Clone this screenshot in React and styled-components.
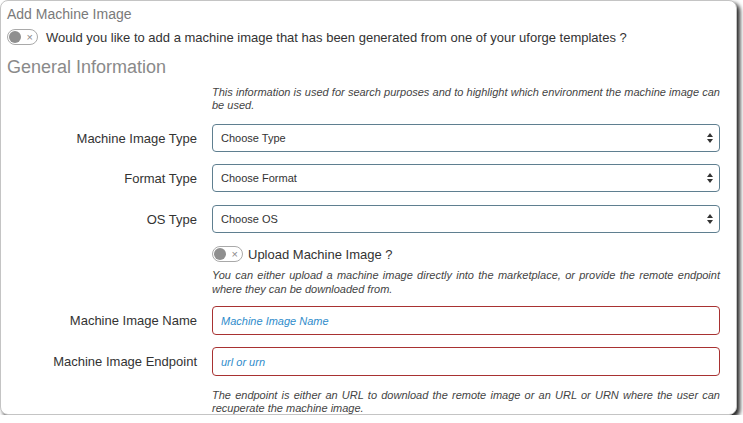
import React from "react";
import styled, { createGlobalStyle } from "styled-components";

const GlobalStyle = createGlobalStyle`
  html, body {
    margin: 0;
    padding: 0;
    background: #ffffff;
  }
  body {
    font-family: "Liberation Sans", Arial, sans-serif;
  }
`;

const Window = styled.div`
  box-sizing: border-box;
  width: 737px;
  height: 415px;
  border: 1px solid #c4c4c4;
  border-radius: 8px;
  box-shadow: 3px 3px 4px rgba(0, 0, 0, 0.85);
  background: #ffffff;
  overflow: hidden;
  padding: 3px 17px 0 6px;
`;

const Title = styled.div`
  font-size: 14px;
  line-height: 20px;
  color: #7a7a7a;
`;

const ToggleRow = styled.div`
  grid-column: ${(p) => p.$col || "auto"};
  display: flex;
  align-items: center;
  gap: ${(p) => p.$gap || 8}px;
  margin-top: ${(p) => p.$top || 0}px;
  font-size: 13px;
  color: #333;
  height: 16px;
`;

const Toggle = styled.span`
  box-sizing: border-box;
  width: 31px;
  height: 16px;
  border: 1px solid #a9a9a9;
  border-radius: 8px;
  display: flex;
  align-items: center;
  justify-content: space-between;
  padding: 0 4px 0 1px;
  flex-shrink: 0;
`;

const Knob = styled.span`
  width: 12px;
  height: 12px;
  border-radius: 50%;
  background: #8f8f8f;
`;

const Cross = styled.span`
  font-size: 11px;
  line-height: 10px;
  color: #8a8a8a;
`;

const Heading = styled.div`
  margin-top: 10px;
  font-size: 18px;
  line-height: 24px;
  color: #8a8a8a;
`;

const Row = styled.div`
  display: grid;
  grid-template-columns: 190px 508px;
  column-gap: 15px;
  align-items: center;
  margin-top: ${(p) => p.$top || 0}px;
`;

const Label = styled.label`
  text-align: right;
  font-size: 13px;
  color: #333;
`;

const Help = styled.p`
  grid-column: 2;
  margin: 0;
  font-size: 11px;
  line-height: ${(p) => p.$lh || 13}px;
  font-style: italic;
  color: #444;
  text-align: justify;
`;

const SelectWrap = styled.div`
  position: relative;
  grid-column: 2;
`;

const Select = styled.select`
  box-sizing: border-box;
  width: 100%;
  height: 28px;
  appearance: none;
  border: 1px solid #5f7f90;
  border-radius: 4px;
  background: #fff;
  padding: 0 8px;
  font-family: "Liberation Sans", Arial, sans-serif;
  font-size: 11px;
  color: #333;
  outline: none;
`;

const Arrows = styled.svg`
  position: absolute;
  right: 7px;
  top: 9px;
  pointer-events: none;
`;

const Input = styled.input`
  box-sizing: border-box;
  width: 100%;
  height: 29px;
  border: 1px solid #a83232;
  border-radius: 4px;
  padding: 0 8px;
  font-family: "Liberation Sans", Arial, sans-serif;
  font-size: 11px;
  outline: none;
  &::placeholder {
    color: #2f8ccb;
    font-style: italic;
  }
`;

const Switch = () => (
  <Toggle>
    <Knob />
    <Cross>×</Cross>
  </Toggle>
);

const Choose = ({ label, text, top }) => (
  <Row $top={top}>
    <Label>{label}</Label>
    <SelectWrap>
      <Select defaultValue="">
        <option value="">{text}</option>
      </Select>
      <Arrows width="6" height="10" viewBox="0 0 6 10">
        <path d="M3 0 L6 4 L0 4 Z" fill="#333" />
        <path d="M0 6 L6 6 L3 10 Z" fill="#333" />
      </Arrows>
    </SelectWrap>
  </Row>
);

const Field = ({ label, placeholder, top }) => (
  <Row $top={top}>
    <Label>{label}</Label>
    <Input placeholder={placeholder} />
  </Row>
);

const App = () => {
  return (
    <>
      <GlobalStyle />
      <Window>
        <Title>Add Machine Image</Title>
        <ToggleRow $top={5}>
          <Switch />
          <span>
            Would you like to add a machine image that has been generated from one of your uforge templates ?
          </span>
        </ToggleRow>
        <Heading>General Information</Heading>
        <Row $top={7}>
          <Help>
            This information is used for search purposes and to highlight which environment the machine image can be used.
          </Help>
        </Row>
        <Choose label="Machine Image Type" text="Choose Type" top={12} />
        <Choose label="Format Type" text="Choose Format" top={12} />
        <Choose label="OS Type" text="Choose OS" top={13} />
        <Row $top={13}>
          <ToggleRow $col={2} $gap={5}>
            <Switch />
            <span>Upload Machine Image ?</span>
          </ToggleRow>
        </Row>
        <Row $top={6}>
          <Help $lh={14}>
            You can either upload a machine image directly into the marketplace, or provide the remote endpoint where they can be downloaded from.
          </Help>
        </Row>
        <Field label="Machine Image Name" placeholder="Machine Image Name" top={10} />
        <Field label="Machine Image Endpoint" placeholder="url or urn" top={12} />
        <Row $top={13}>
          <Help>
            The endpoint is either an URL to download the remote image or an URL or URN where the user can recuperate the machine image.
          </Help>
        </Row>
      </Window>
    </>
  );
};

export default App;
